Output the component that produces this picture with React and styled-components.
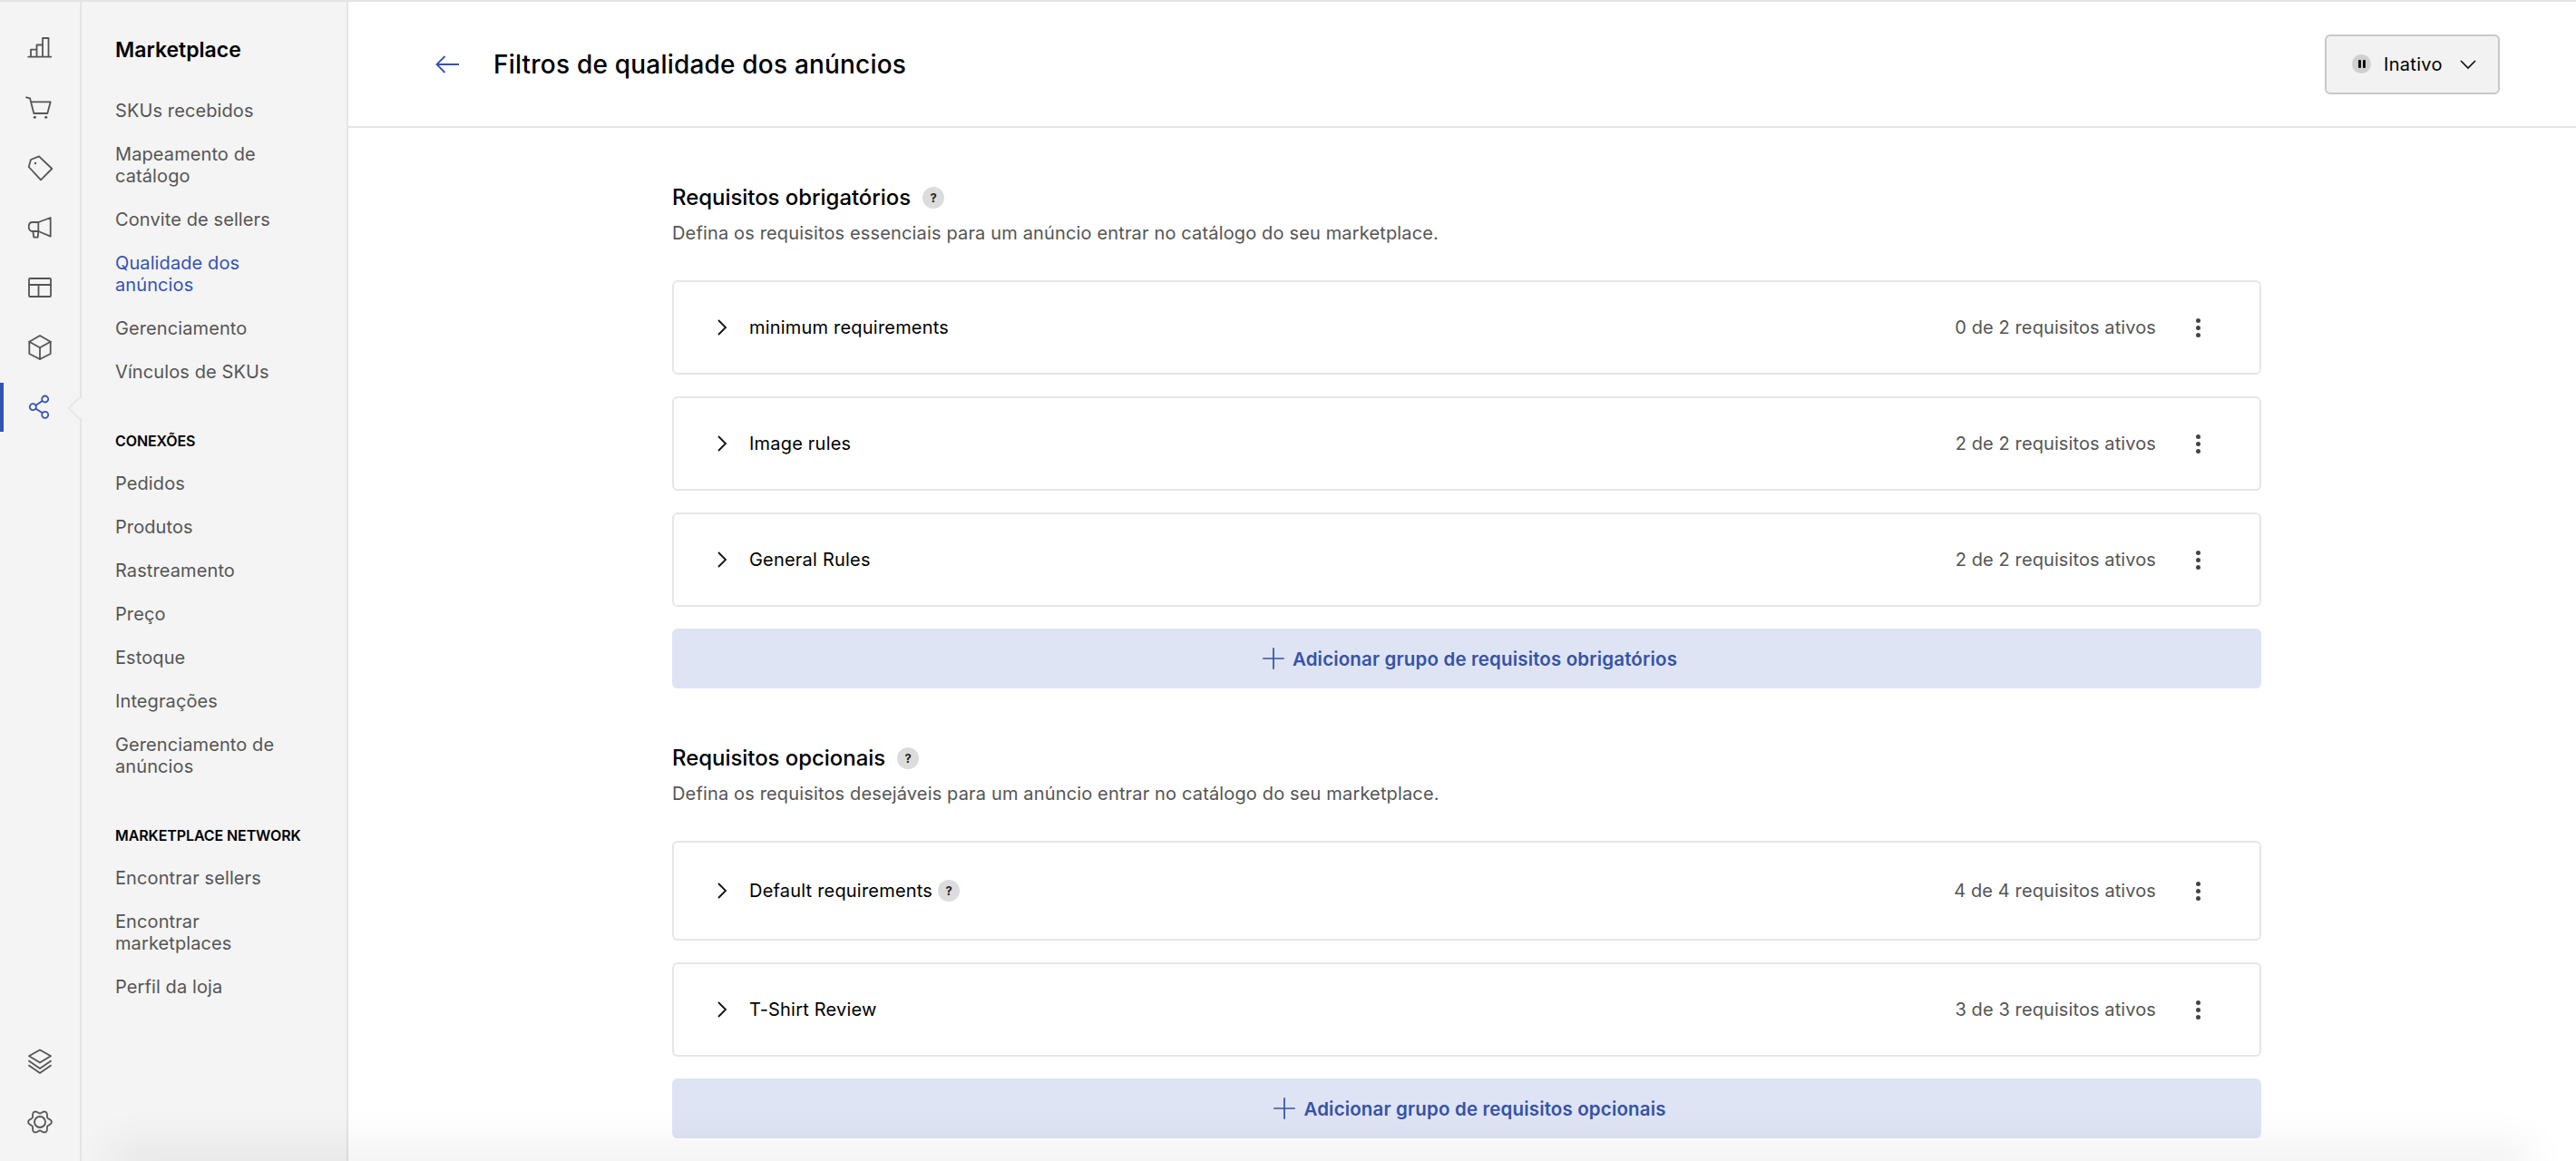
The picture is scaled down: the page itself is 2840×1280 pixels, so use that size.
import React from "react";
import styled, { createGlobalStyle } from "styled-components";
import { Plus } from "lucide-react";

const GlobalStyle = createGlobalStyle`
  html, body { margin: 0; padding: 0; background: #fff; }
  body { font-family: Inter, "Liberation Sans", sans-serif; color: #000; }
  * { box-sizing: border-box; }
`;

const Page = styled.div`
  position: relative;
  display: flex;
  width: 2840px;
  height: 1280px;
  overflow: hidden;
  border-top: 2px solid #e4e4e4;
`;

const Rail = styled.nav`
  display: flex;
  flex-direction: column;
  align-items: stretch;
  width: 90px;
  padding: 18px 0 10px;
  background: #f4f4f4;
  border-right: 2px solid #e4e4e4;
  flex-shrink: 0;
`;

const RailItem = styled.div`
  position: relative;
  display: flex;
  align-items: center;
  justify-content: center;
  height: 66px;
  color: ${({ $active }) => ($active ? "#3453b5" : "#555")};

  ${({ $active }) =>
    $active &&
    `
    &::before {
      content: "";
      position: absolute;
      left: 0;
      top: 6px;
      width: 4px;
      height: 54px;
      background: #3453b5;
    }
    &::after {
      content: "";
      position: absolute;
      right: -8px;
      top: 25px;
      width: 16px;
      height: 16px;
      background: #f4f4f4;
      border-left: 2px solid #e8e8e8;
      border-bottom: 2px solid #e8e8e8;
      transform: rotate(45deg);
    }
  `}
`;

const RailBottom = styled.div`
  margin-top: auto;
`;

const RailSvg = styled.svg.attrs({
  width: 28,
  height: 28,
  viewBox: "0 0 28 28",
  fill: "none",
  stroke: "currentColor",
})`
  overflow: visible;
  stroke-width: 1.8;
  stroke-linejoin: round;
  stroke-linecap: round;
`;

const Sidebar = styled.aside`
  width: 294px;
  padding: 35px 60px 0 37px;
  background: #f4f4f4;
  border-right: 2px solid #e4e4e4;
  flex-shrink: 0;
`;

const SideTitle = styled.div`
  font-size: 23px;
  line-height: 36px;
  font-weight: 600;
  margin-bottom: 37px;
  white-space: nowrap;
`;

const NavGroup = styled.div`
  display: flex;
  flex-direction: column;
  gap: 24px;
  margin-bottom: 52px;
`;

const NavHead = styled.div`
  font-size: 16px;
  line-height: 24px;
  font-weight: 600;
  letter-spacing: -0.1px;
  text-transform: uppercase;
  white-space: nowrap;
  margin-bottom: -1px;
`;

const NavLink = styled.div`
  font-size: 20px;
  line-height: 24px;
  letter-spacing: 0.1px;
  color: ${({ $active }) => ($active ? "#3453b5" : "#555")};
`;

const Main = styled.main`
  flex: 1;
  min-width: 0;
`;

const Header = styled.header`
  display: flex;
  align-items: center;
  height: 139px;
  padding: 0 84px 0 96px;
  border-bottom: 2px solid #e4e4e4;
`;

const BackArrow = styled.svg.attrs({
  width: 26,
  height: 20,
  viewBox: "0 0 26 20",
  fill: "none",
  stroke: "currentColor",
})`
  color: #3453b5;
  margin-right: 38px;
  stroke-width: 1.8;
`;

const Title = styled.h1`
  margin: 0;
  flex: 1;
  font-size: 28px;
  line-height: 40px;
  font-weight: 450;
  letter-spacing: 0.2px;
`;

const StatusButton = styled.div`
  display: flex;
  align-items: center;
  width: 193px;
  height: 66px;
  padding-left: 28px;
  background: #f2f2f2;
  border: 2px solid #c8c8c8;
  border-radius: 6px;
  font-size: 20px;
  font-weight: 400;
  letter-spacing: 0.3px;
`;

const PauseDot = styled.span`
  display: flex;
  align-items: center;
  justify-content: center;
  gap: 2px;
  width: 21px;
  height: 21px;
  margin-right: 14px;
  border-radius: 50%;
  background: #d0d0d0;

  &::before,
  &::after {
    content: "";
    width: 3px;
    height: 9px;
    border-radius: 1px;
    background: #111;
  }
`;

const StatusChevron = styled.svg.attrs({
  width: 18,
  height: 10,
  viewBox: "0 0 18 10",
  fill: "none",
  stroke: "#111",
})`
  margin-left: 19px;
  stroke-width: 1.7;
`;

const Content = styled.div`
  width: 1752px;
  margin-left: 357px;
  padding-top: 61px;
`;

const Section = styled.section`
  margin-bottom: 61px;
`;

const SectionHead = styled.div`
  display: flex;
  align-items: center;
  gap: 13px;
  height: 32px;
`;

const SectionTitle = styled.h2`
  margin: 0;
  font-size: 24px;
  line-height: 32px;
  font-weight: 550;
  letter-spacing: -0.05px;
`;

const SectionText = styled.p`
  margin: 11px 0 40px;
  font-size: 20px;
  line-height: 24px;
  letter-spacing: 0.15px;
  color: #555;
`;

const Help = styled.span`
  display: inline-flex;
  align-items: center;
  justify-content: center;
  width: 24px;
  height: 24px;
  border-radius: 50%;
  background: #dcdcdc;
  font-size: 13px;
  font-weight: 700;
  color: #222;
`;

const Stack = styled.div`
  display: flex;
  flex-direction: column;
  gap: 24px;
`;

const Row = styled.div`
  display: flex;
  align-items: center;
  height: ${({ $tall }) => ($tall ? "110px" : "104px")};
  padding: 0 65px 0 47px;
  background: #fff;
  border: 2px solid #e6e6e6;
  border-radius: 6px;
`;

const RowChevron = styled.svg.attrs({
  width: 12,
  height: 18,
  viewBox: "0 0 12 18",
  fill: "none",
  stroke: "#111",
})`
  margin-right: 24px;
  stroke-width: 1.8;
`;

const RowLabel = styled.span`
  font-size: 20px;
  font-weight: 400;
  letter-spacing: 0.2px;
  margin-right: 6px;
`;

const RowCount = styled.span`
  margin-left: auto;
  font-size: 20px;
  letter-spacing: 0.1px;
  color: #555;
`;

const Dots = styled.span`
  display: flex;
  flex-direction: column;
  align-items: center;
  gap: 3px;
  width: 6px;
  margin-left: 43px;

  i {
    width: 5px;
    height: 5px;
    border-radius: 50%;
    background: #444;
  }
`;

const AddButton = styled.div`
  display: flex;
  align-items: center;
  justify-content: center;
  gap: 2px;
  height: 66px;
  background: #dfe4f4;
  border-radius: 6px;
  color: #3453a8;
  font-size: 20.500px;
  font-weight: 600;
  letter-spacing: 0.15px;
`;

const BottomShade = styled.div`
  position: absolute;
  left: 130px;
  right: 60px;
  bottom: -2px;
  height: 2px;
  box-shadow: 0 0 50px 8px rgba(0, 0, 0, 0.14);
  pointer-events: none;
`;

// six soft lobes, sampled around the circle
const gearPath = Array.from({ length: 73 }, (_, i) => {
  const a = (i / 72) * Math.PI * 2;
  const r = 11.2 + 1.7 * Math.cos(6 * a);
  return `${i ? "L" : "M"}${(14 + r * Math.cos(a)).toFixed(2)} ${(14 + r * Math.sin(a)).toFixed(2)}`;
}).join("") + "Z";

const BarsIcon = () => (
  <RailSvg>
    <path d="M1.300 23.700h25M4 23.700v-8h6.500v8M10.500 23.700V10.500H17v13.200M17 23.700V3h6.500v20.700" />
  </RailSvg>
);

const CartIcon = () => (
  <RailSvg>
    <path d="M-1 2.300 3 3.300 7.300 20h15l3.400-12.700H4" />
    <circle cx="8.300" cy="24.300" r="1.500" fill="currentColor" stroke="none" />
    <circle cx="20.700" cy="24.300" r="1.500" fill="currentColor" stroke="none" />
  </RailSvg>
);

const TagIcon = () => (
  <RailSvg>
    <path d="M4 5 13 1.300 27.300 15 15 27.300 1.700 13z" />
    <circle cx="9" cy="9" r="1.200" fill="currentColor" stroke="none" />
  </RailSvg>
);

const MegaphoneIcon = () => (
  <RailSvg>
    <path d="M25.700 3v20.700L12.300 18H5.700c-2.500 0-4-2-4-5s1.500-5 4-5h6.600z" />
    <path d="M12.300 8v10M6.300 18l1 6.700h4.400l.6-6.700" />
  </RailSvg>
);

const LayoutIcon = () => (
  <RailSvg>
    <rect x="2" y="4" width="24" height="20" rx="1" />
    <path d="M2 11h24M12.500 11v13" />
  </RailSvg>
);

const BoxIcon = () => (
  <RailSvg>
    <path d="M14 1l11.700 6.700V21L14 27 2.300 21V7.700z" />
    <path d="M2.300 7.700 14 14.300 25.700 7.700M14 14.300V27" />
  </RailSvg>
);

const ShareIcon = () => (
  <RailSvg>
    <circle cx="19.700" cy="5" r="3.500" />
    <circle cx="6.300" cy="13.700" r="3.500" />
    <circle cx="19.700" cy="22.300" r="3.500" />
    <path d="M9.300 12 16.700 7M9.300 15.600 16.700 20.300" />
  </RailSvg>
);

const LayersIcon = () => (
  <RailSvg>
    <path d="M14 .5 26 7.300 14 14.500 2 7.300z" />
    <path d="M2 12.700 14 21l12-8.300M2 17.700 14 26l12-8.300" />
  </RailSvg>
);

const GearIcon = () => (
  <RailSvg>
    <path d={gearPath} />
    <circle cx="14" cy="14" r="6" />
  </RailSvg>
);

const groups = [
  {
    title: "Requisitos obrigatórios",
    text: "Defina os requisitos essenciais para um anúncio entrar no catálogo do seu marketplace.",
    add: "Adicionar grupo de requisitos obrigatórios",
    rows: [
      { label: "minimum requirements", count: "0 de 2 requisitos ativos" },
      { label: "Image rules", count: "2 de 2 requisitos ativos" },
      { label: "General Rules", count: "2 de 2 requisitos ativos" },
    ],
  },
  {
    title: "Requisitos opcionais",
    text: "Defina os requisitos desejáveis para um anúncio entrar no catálogo do seu marketplace.",
    add: "Adicionar grupo de requisitos opcionais",
    rows: [
      { label: "Default requirements", count: "4 de 4 requisitos ativos", help: true },
      { label: "T-Shirt Review", count: "3 de 3 requisitos ativos" },
    ],
  },
];

const railIcons = [<BarsIcon />, <CartIcon />, <TagIcon />, <MegaphoneIcon />, <LayoutIcon />, <BoxIcon />];

const App = () => {
  return (
    <Page>
      <GlobalStyle />
      <Rail>
        {railIcons.map((icon, i) => (
          <RailItem key={i}>{icon}</RailItem>
        ))}
        <RailItem $active>
          <ShareIcon />
        </RailItem>
        <RailBottom>
          <RailItem>
            <LayersIcon />
          </RailItem>
          <RailItem>
            <GearIcon />
          </RailItem>
        </RailBottom>
      </Rail>

      <Sidebar>
        <SideTitle>Marketplace</SideTitle>
        <NavGroup>
          <NavLink>SKUs recebidos</NavLink>
          <NavLink>Mapeamento de catálogo</NavLink>
          <NavLink>Convite de sellers</NavLink>
          <NavLink $active>Qualidade dos anúncios</NavLink>
          <NavLink>Gerenciamento</NavLink>
          <NavLink>Vínculos de SKUs</NavLink>
        </NavGroup>
        <NavGroup>
          <NavHead>Conexões</NavHead>
          <NavLink>Pedidos</NavLink>
          <NavLink>Produtos</NavLink>
          <NavLink>Rastreamento</NavLink>
          <NavLink>Preço</NavLink>
          <NavLink>Estoque</NavLink>
          <NavLink>Integrações</NavLink>
          <NavLink>Gerenciamento de anúncios</NavLink>
        </NavGroup>
        <NavGroup>
          <NavHead>Marketplace Network</NavHead>
          <NavLink>Encontrar sellers</NavLink>
          <NavLink>Encontrar marketplaces</NavLink>
          <NavLink>Perfil da loja</NavLink>
        </NavGroup>
      </Sidebar>

      <Main>
        <Header>
          <BackArrow>
            <path d="M26 10H1.500M10.500 1 1.500 10l9 9" />
          </BackArrow>
          <Title>Filtros de qualidade dos anúncios</Title>
          <StatusButton>
            <PauseDot />
            Inativo
            <StatusChevron>
              <path d="M1 1l8 8 8-8" />
            </StatusChevron>
          </StatusButton>
        </Header>
        <Content>
          {groups.map((group) => (
            <Section key={group.title}>
              <SectionHead>
                <SectionTitle>{group.title}</SectionTitle>
                <Help>?</Help>
              </SectionHead>
              <SectionText>{group.text}</SectionText>
              <Stack>
                {group.rows.map((row) => (
                  <Row key={row.label} $tall={row.help}>
                    <RowChevron>
                      <path d="M2 1l8 8-8 8" />
                    </RowChevron>
                    <RowLabel>{row.label}</RowLabel>
                    {row.help && <Help>?</Help>}
                    <RowCount>{row.count}</RowCount>
                    <Dots>
                      <i />
                      <i />
                      <i />
                    </Dots>
                  </Row>
                ))}
                <AddButton>
                  <Plus size={38} strokeWidth={1.1} />
                  {group.add}
                </AddButton>
              </Stack>
            </Section>
          ))}
        </Content>
      </Main>
      <BottomShade />
    </Page>
  );
};

export default App;
